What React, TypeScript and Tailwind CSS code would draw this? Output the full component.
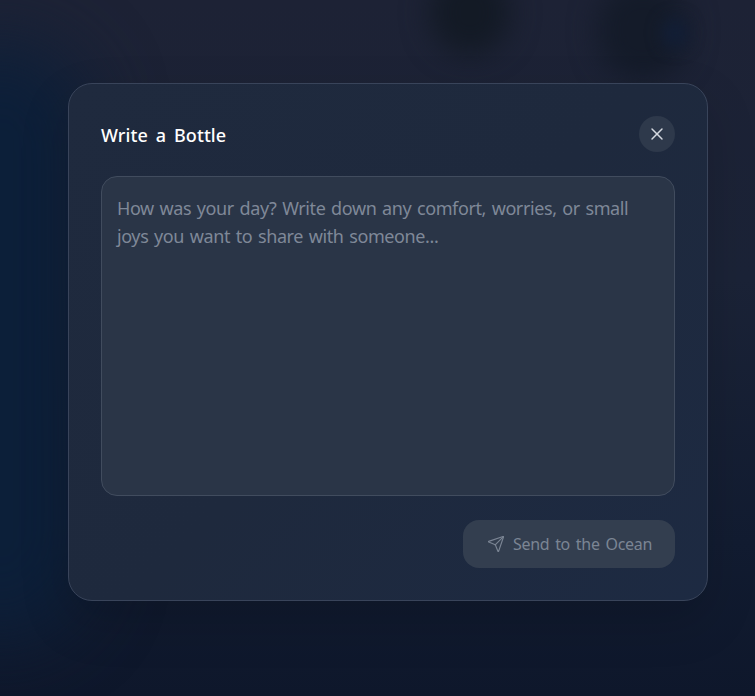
import React from "react";
import { X, Send } from "lucide-react";

export default function App() {
  return (
    <div className="relative h-[696px] w-[755px] overflow-hidden bg-[linear-gradient(180deg,#1d2235_0%,#1b2337_40%,#121c31_78%,#0e172b_100%)] pl-[68px] pt-[83px]" style={{ fontFamily: '"Noto Sans", "Noto Sans CJK KR", sans-serif' }}>
      <div className="absolute left-[-90px] top-[40px] h-[600px] w-[180px] rounded-full bg-[#0c1f39] blur-[36px]" />
      <div className="absolute left-[430px] top-[-30px] h-[85px] w-[80px] rounded-full bg-[#131a25] blur-[14px]" />
      <div className="absolute left-[598px] top-[-20px] h-[100px] w-[90px] rounded-full bg-[#141b29] blur-[14px]" />
      <div className="absolute left-[662px] top-[18px] h-[30px] w-[26px] rounded-full bg-[#121e36] blur-[8px]" />
      <div className="relative flex h-[518px] w-[640px] flex-col rounded-[24px] border border-[#39445a] bg-[linear-gradient(135deg,#1f2a3e_0%,#1e293d_50%,#1d2a42_100%)] p-8 shadow-[0_20px_50px_rgba(0,0,0,0.15)]">
        <div className="flex items-center justify-between">
          <h2 className="pt-[2px] text-[18px] font-medium tracking-[0.1px] text-white [word-spacing:3px]">Write a Bottle</h2>
          <button className="flex h-9 w-9 items-center justify-center rounded-full bg-[#2e394b] text-[#d5d9e0]">
            <X size={20} strokeWidth={1.75} />
          </button>
        </div>
        <div className="mt-6 h-[320px] rounded-2xl border border-[#414c5e] bg-[#2a3547] px-[15px] pb-4 pt-[17px] text-[18px] leading-[28px] tracking-[-0.4px] text-[#7f8898] [word-spacing:1.4px]">
          How was your day? Write down any comfort, worries, or small joys you want to share with someone...
        </div>
        <div className="mt-6 flex justify-end">
          <button className="flex h-12 w-[212px] items-center justify-center gap-2 rounded-2xl bg-[#333e4f] pl-px text-[16px] tracking-[-0.3px] text-[#7b8594] [word-spacing:2px]">
            <Send size={18} strokeWidth={1.5} />
            Send to the Ocean
          </button>
        </div>
      </div>
    </div>
  );
}
